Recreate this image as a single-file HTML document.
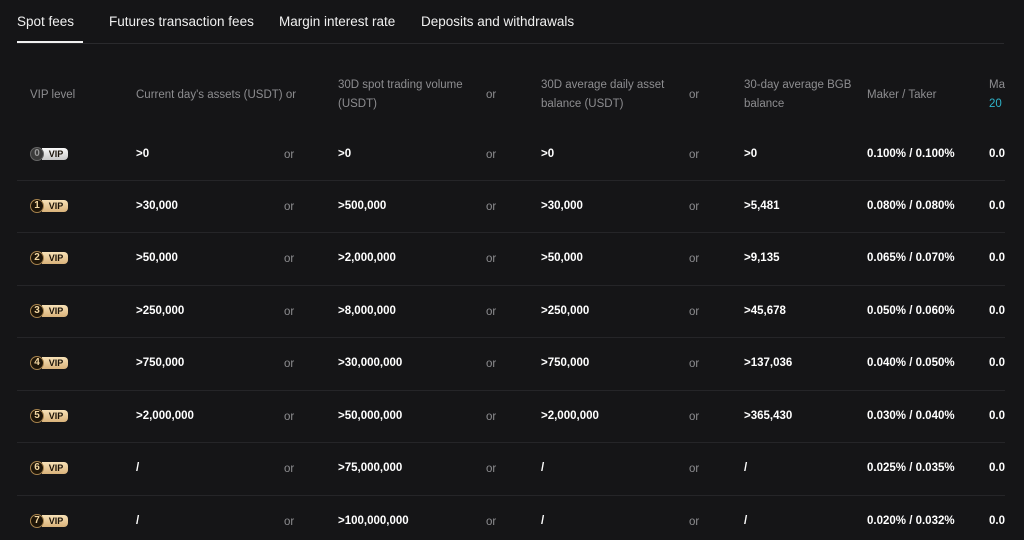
<!DOCTYPE html>
<html><head><meta charset="utf-8"><style>
*{margin:0;padding:0;box-sizing:border-box}
html,body{width:1024px;height:540px;overflow:hidden}
body{background:#151517;font-family:"Liberation Sans",sans-serif;position:relative}
.t{position:absolute;top:14px;color:#f0f0f0;font-size:13.5px}
.ul{position:absolute;left:17px;top:41px;width:66px;height:2px;background:#f0f0f0}
.dv{position:absolute;left:17px;top:43px;width:987px;height:1px;background:#2a2a2d}
.h{position:absolute;color:#8d8d90;font-size:11.5px;line-height:19px}
.r{position:absolute;left:17px;width:988px;height:52px}
.r span{position:absolute;top:50%;transform:translateY(-50%);font-size:11.5px;color:#fff;font-weight:bold;white-space:nowrap}
.r span.o{color:#8d8d90;font-weight:normal;font-size:11.5px;margin-top:1px}
.sep{position:absolute;left:17px;width:988px;height:1px;background:#252528}
.b{position:absolute;left:12px;top:50%;transform:translateY(-50%);width:40px;height:14px}
.b i{position:absolute;left:1px;top:0;width:14px;height:14px;border-radius:50%;background:#1e1508;border:1px solid #a8844e;color:#f3d7a2;font-size:10px;font-style:normal;font-weight:bold;text-align:center;line-height:12px;z-index:2}
.b em{position:absolute;left:13px;top:1px;width:26px;height:12px;border-radius:0 4px 4px 0;background:linear-gradient(#f8e2b8,#d9b27a);color:#1a1208;font-size:9px;font-style:normal;font-weight:bold;text-align:center;line-height:12px;padding-left:2px}
.b.s i{background:#3a3a3a;border-color:#666;color:#999}
.b.s em{background:linear-gradient(#fafafa,#c8c8c8)}
.c1{left:119px}.o1{left:267px}.c2{left:321px}.o2{left:469px}.c3{left:524px}.o3{left:672px}.c4{left:727px}.c5{left:850px}.c6{left:972px}
</style></head><body>
<div class="t" style="left:17px">Spot fees</div>
<div class="t" style="left:109px">Futures transaction fees</div>
<div class="t" style="left:279px">Margin interest rate</div>
<div class="t" style="left:421px">Deposits and withdrawals</div>
<div class="dv"></div><div class="ul"></div>
<div style="position:absolute;left:1005px;top:0;width:19px;height:540px;background:#151517;z-index:5"></div>
<div class="h" style="left:30px;top:86px">VIP level</div>
<div class="h" style="left:136px;top:86px">Current day's assets (USDT) or</div>
<div class="h" style="left:338px;top:76px">30D spot trading volume<br>(USDT)</div>
<div class="h" style="left:486px;top:86px">or</div>
<div class="h" style="left:541px;top:76px">30D average daily asset<br>balance (USDT)</div>
<div class="h" style="left:689px;top:86px">or</div>
<div class="h" style="left:744px;top:76px">30-day average BGB<br>balance</div>
<div class="h" style="left:867px;top:86px">Maker / Taker</div>
<div class="h" style="left:989px;top:76px">Ma<br><span style="color:#2fb3c9">20</span></div>

<div class="r" style="top:128px"><div class="b s"><i>0</i><em>VIP</em></div><span class="c1">&gt;0</span><span class="o o1">or</span><span class="c2">&gt;0</span><span class="o o2">or</span><span class="c3">&gt;0</span><span class="o o3">or</span><span class="c4">&gt;0</span><span class="c5">0.100% / 0.100%</span><span class="c6">0.0</span></div>
<div class="sep" style="top:180px"></div>
<div class="r" style="top:180px"><div class="b"><i>1</i><em>VIP</em></div><span class="c1">&gt;30,000</span><span class="o o1">or</span><span class="c2">&gt;500,000</span><span class="o o2">or</span><span class="c3">&gt;30,000</span><span class="o o3">or</span><span class="c4">&gt;5,481</span><span class="c5">0.080% / 0.080%</span><span class="c6">0.0</span></div>
<div class="sep" style="top:232px"></div>
<div class="r" style="top:232px"><div class="b"><i>2</i><em>VIP</em></div><span class="c1">&gt;50,000</span><span class="o o1">or</span><span class="c2">&gt;2,000,000</span><span class="o o2">or</span><span class="c3">&gt;50,000</span><span class="o o3">or</span><span class="c4">&gt;9,135</span><span class="c5">0.065% / 0.070%</span><span class="c6">0.0</span></div>
<div class="sep" style="top:285px"></div>
<div class="r" style="top:285px"><div class="b"><i>3</i><em>VIP</em></div><span class="c1">&gt;250,000</span><span class="o o1">or</span><span class="c2">&gt;8,000,000</span><span class="o o2">or</span><span class="c3">&gt;250,000</span><span class="o o3">or</span><span class="c4">&gt;45,678</span><span class="c5">0.050% / 0.060%</span><span class="c6">0.0</span></div>
<div class="sep" style="top:337px"></div>
<div class="r" style="top:337px"><div class="b"><i>4</i><em>VIP</em></div><span class="c1">&gt;750,000</span><span class="o o1">or</span><span class="c2">&gt;30,000,000</span><span class="o o2">or</span><span class="c3">&gt;750,000</span><span class="o o3">or</span><span class="c4">&gt;137,036</span><span class="c5">0.040% / 0.050%</span><span class="c6">0.0</span></div>
<div class="sep" style="top:390px"></div>
<div class="r" style="top:390px"><div class="b"><i>5</i><em>VIP</em></div><span class="c1">&gt;2,000,000</span><span class="o o1">or</span><span class="c2">&gt;50,000,000</span><span class="o o2">or</span><span class="c3">&gt;2,000,000</span><span class="o o3">or</span><span class="c4">&gt;365,430</span><span class="c5">0.030% / 0.040%</span><span class="c6">0.0</span></div>
<div class="sep" style="top:442px"></div>
<div class="r" style="top:442px"><div class="b"><i>6</i><em>VIP</em></div><span class="c1">/</span><span class="o o1">or</span><span class="c2">&gt;75,000,000</span><span class="o o2">or</span><span class="c3">/</span><span class="o o3">or</span><span class="c4">/</span><span class="c5">0.025% / 0.035%</span><span class="c6">0.0</span></div>
<div class="sep" style="top:495px"></div>
<div class="r" style="top:495px"><div class="b"><i>7</i><em>VIP</em></div><span class="c1">/</span><span class="o o1">or</span><span class="c2">&gt;100,000,000</span><span class="o o2">or</span><span class="c3">/</span><span class="o o3">or</span><span class="c4">/</span><span class="c5">0.020% / 0.032%</span><span class="c6">0.0</span></div>
</body></html>
